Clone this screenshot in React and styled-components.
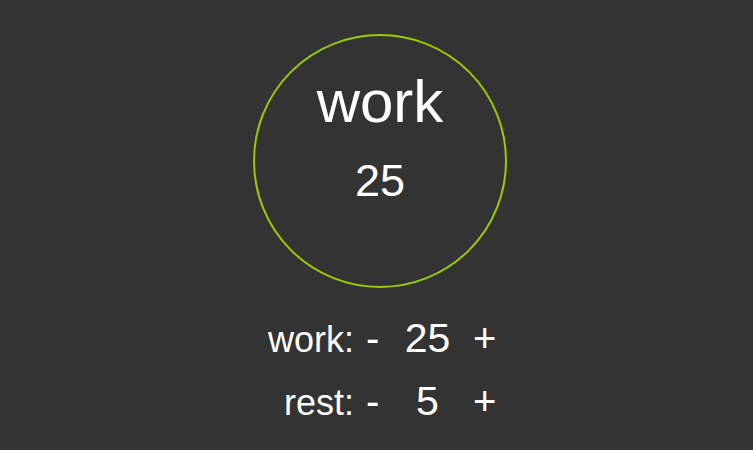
import React, { useState } from "react";
import styled, { createGlobalStyle } from "styled-components";

const GlobalStyle = createGlobalStyle`
  html, body {
    margin: 0;
    padding: 0;
    background: #333333;
    height: 100%;
  }
  body {
    font-family: "Liberation Sans", Arial, sans-serif;
    color: #ffffff;
  }
`;

const Page = styled.div`
  display: flex;
  flex-direction: column;
  align-items: center;
  padding-top: 34px;
`;

const Clock = styled.div`
  box-sizing: border-box;
  width: 254px;
  height: 254px;
  margin-left: 7px;
  border: 2px solid #99cc00;
  border-radius: 50%;
  display: flex;
  flex-direction: column;
  align-items: center;
  padding-top: 36px;
`;

const Session = styled.div`
  font-size: 60px;
  line-height: 60px;
  height: 60px;
`;

const Time = styled.div`
  font-size: 45px;
  line-height: 45px;
  margin-top: 26px;
`;

const Settings = styled.div`
  display: grid;
  grid-template-columns: 100px 26px 93px 26px;
  grid-auto-rows: 63px;
  align-items: baseline;
  margin-top: 19px;
`;

const Label = styled.span`
  font-size: 36px;
  line-height: 63px;
  text-align: right;
`;

const Step = styled.span`
  font-size: 40px;
  line-height: 63px;
  padding-left: ${(p) => (p.$pad ? p.$pad : 0)}px;
  cursor: pointer;
  user-select: none;
`;

const Value = styled.span`
  font-size: 41px;
  line-height: 63px;
  text-align: center;
  padding-left: 2px;
`;

const Row = ({ label, value, onChange }) => (
  <>
    <Label>{label}:</Label>
    <Step $pad={12} onClick={() => onChange(Math.max(1, value - 1))}>
      -
    </Step>
    <Value>{value}</Value>
    <Step onClick={() => onChange(value + 1)}>+</Step>
  </>
);

export default function App() {
  const [work, setWork] = useState(25);
  const [rest, setRest] = useState(5);

  return (
    <>
      <GlobalStyle />
      <Page>
        <Clock>
          <Session>work</Session>
          <Time>{work}</Time>
        </Clock>
        <Settings>
          <Row label="work" value={work} onChange={setWork} />
          <Row label="rest" value={rest} onChange={setRest} />
        </Settings>
      </Page>
    </>
  );
}
